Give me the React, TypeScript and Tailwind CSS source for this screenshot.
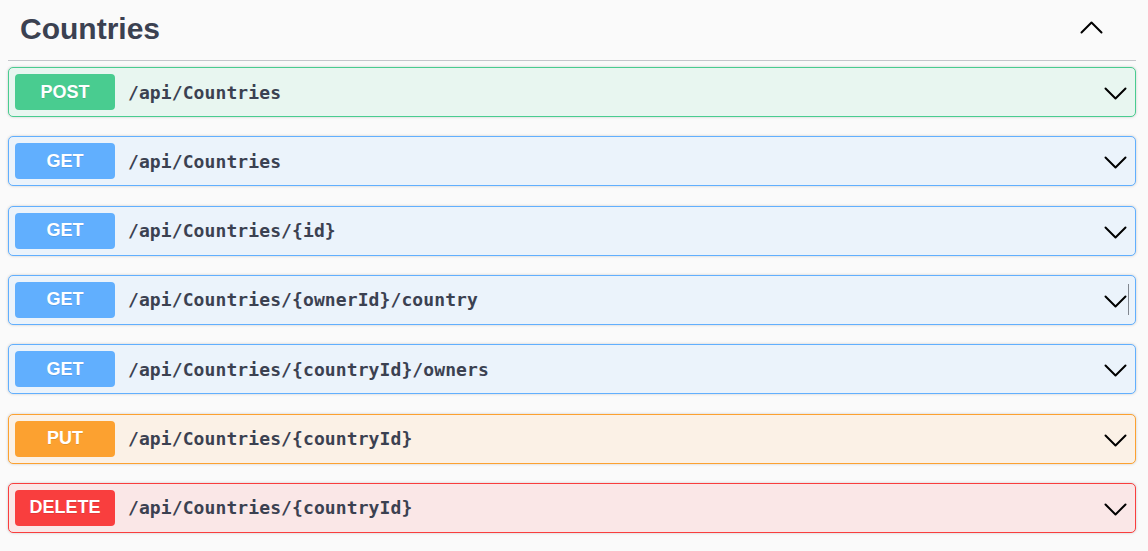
import React from 'react';

type Method = 'POST' | 'GET' | 'PUT' | 'DELETE';

interface Operation {
  method: Method;
  path: string;
  caret?: boolean;
}

const styles: Record<Method, { box: string; badge: string }> = {
  POST: { box: 'bg-[#e8f6f0] border-[#49cc90]', badge: 'bg-[#49cc90]' },
  GET: { box: 'bg-[#ebf3fb] border-[#61affe]', badge: 'bg-[#61affe]' },
  PUT: { box: 'bg-[#fbf1e6] border-[#fca130]', badge: 'bg-[#fca130]' },
  DELETE: { box: 'bg-[#fae7e7] border-[#f93e3e]', badge: 'bg-[#f93e3e]' },
};

const operations: Operation[] = [
  { method: 'POST', path: '/api/Countries' },
  { method: 'GET', path: '/api/Countries' },
  { method: 'GET', path: '/api/Countries/{id}' },
  { method: 'GET', path: '/api/Countries/{ownerId}/country', caret: true },
  { method: 'GET', path: '/api/Countries/{countryId}/owners' },
  { method: 'PUT', path: '/api/Countries/{countryId}' },
  { method: 'DELETE', path: '/api/Countries/{countryId}' },
];

const Chevron: React.FC<{ up?: boolean }> = ({ up }) => (
  <svg width="23" height="13" viewBox="0 0 23 13" fill="none" className="shrink-0">
    <polyline
      points={up ? '1.5,11.5 11.5,1.5 21.5,11.5' : '1.5,1.5 11.5,11.5 21.5,1.5'}
      stroke="#000"
      strokeWidth="2"
      strokeLinecap="round"
      strokeLinejoin="round"
    />
  </svg>
);

const OperationRow: React.FC<Operation> = ({ method, path, caret }) => {
  const s = styles[method];
  return (
    <div
      className={`flex items-center h-[50px] mb-[19.33px] p-[6px] border rounded-[5px] shadow-[0_0_3px_rgba(0,0,0,0.19)] ${s.box}`}
    >
      <span
        className={`flex items-center justify-center w-[100px] h-[36px] rounded-[4px] text-white font-bold text-[18px] [text-shadow:0_1px_0_rgba(0,0,0,0.1)] ${s.badge}`}
        style={{ fontFamily: '"Liberation Sans", Arial, sans-serif' }}
      >
        {method}
      </span>
      <span
        className="ml-[13px] flex-1 text-[18px] font-bold text-[#3b4151] tracking-[0.1px]"
        style={{ fontFamily: '"DejaVu Sans Mono", "Liberation Mono", monospace' }}
      >
        {path}
      </span>
      <div className={`flex items-center mt-[3px] ${caret ? 'mr-[0px]' : 'mr-[2px]'}`}>
        <Chevron />
        {caret && <span className="ml-[1px] -mt-[3px] w-px h-[31px] bg-[#80868f]" />}
      </div>
    </div>
  );
};

export default function App() {
  return (
    <div className="min-h-[551px] bg-[#fafafa]" style={{ fontFamily: '"Liberation Sans", Arial, sans-serif' }}>
      <div className="ml-[8px] w-[1128px]">
        <div className="flex items-start h-[61px] border-b border-[#c4c6cb] mb-[6px]">
          <h3 className="flex-1 pl-[12px] pt-[11px] text-[30px] leading-[35px] font-bold text-[#3b4151]">
            Countries
          </h3>
          <div className="mt-[21px] mr-[33px]">
            <Chevron up />
          </div>
        </div>
        {operations.map((op, i) => (
          <OperationRow key={i} {...op} />
        ))}
      </div>
    </div>
  );
}
